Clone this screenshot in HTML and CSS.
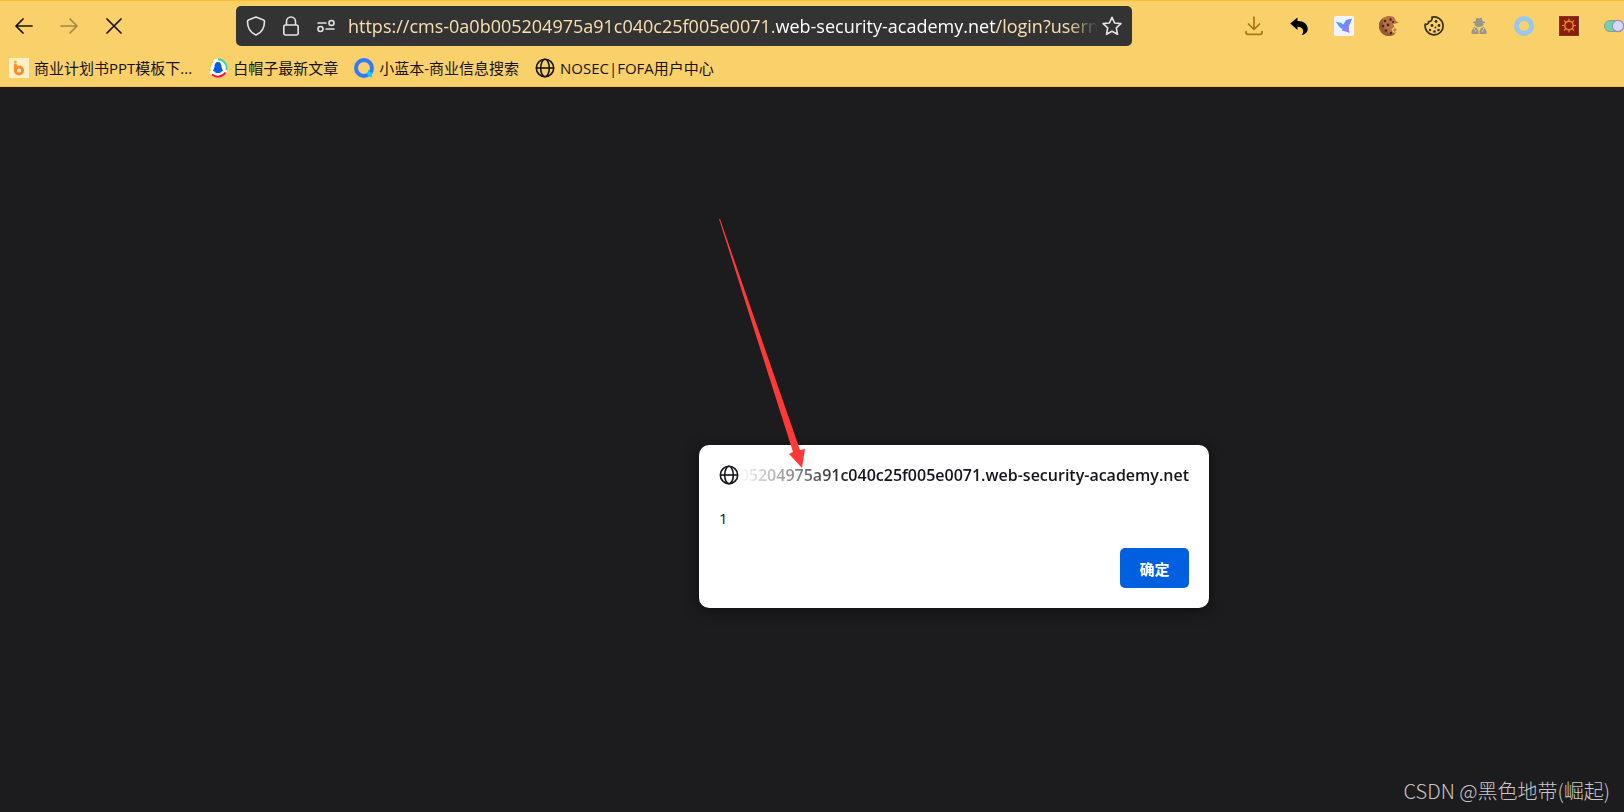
FILE: index.html
```html
<!DOCTYPE html>
<html lang="zh-CN">
<head>
    <meta charset="UTF-8">
    <meta name="viewport" content="width=device-width, initial-scale=1.0">
    <title>web-security-academy.net</title>
    <link rel="stylesheet" href="styles.css">
</head>
<body>
    <header class="browser">
        <div class="toolbar">
            <nav class="nav-buttons" aria-label="Navigation">
                <button class="icon-button" aria-label="Back">
                    <svg width="20" height="20" viewBox="0 0 20 20" fill="none" stroke="#15141a" stroke-width="1.7" stroke-linecap="round" stroke-linejoin="round"><path d="M18 10H2M9 3L2 10L9 17"/></svg>
                </button>
                <button class="icon-button" aria-label="Forward" disabled>
                    <svg width="20" height="20" viewBox="0 0 20 20" fill="none" stroke="#a3874a" stroke-width="1.7" stroke-linecap="round" stroke-linejoin="round"><path d="M2 10H18M11 3L18 10L11 17"/></svg>
                </button>
                <button class="icon-button" aria-label="Stop">
                    <svg width="20" height="20" viewBox="0 0 20 20" fill="none" stroke="#15141a" stroke-width="1.7" stroke-linecap="round"><path d="M3 3L17 17M17 3L3 17"/></svg>
                </button>
            </nav>

            <div class="urlbar">
                <button class="urlbar-button" aria-label="Tracking protection">
                    <svg width="20" height="20" viewBox="0 0 20 20" fill="none" stroke="#e4e4e4" stroke-width="1.6" stroke-linejoin="round"><path d="M10 1L17.5 3.9Q18.5 4.3 18.5 5.4C18.5 11.6 15.6 16.6 10 19C4.4 16.6 1.5 11.6 1.5 5.4Q1.5 4.3 2.5 3.9Z"/></svg>
                </button>
                <button class="urlbar-button" aria-label="Connection secure">
                    <svg width="20" height="20" viewBox="0 0 20 20" fill="none" stroke="#e4e4e4" stroke-width="1.6"><path d="M5.5 9V5.5a4.5 4.5 0 0 1 9 0V9"/><rect x="2.8" y="9" width="14.4" height="10" rx="2"/></svg>
                </button>
                <button class="urlbar-button" aria-label="Permissions">
                    <svg width="20" height="20" viewBox="0 0 20 20" fill="none" stroke="#e4e4e4" stroke-width="1.6" stroke-linecap="round"><circle cx="15.5" cy="7" r="2.5"/><circle cx="4.5" cy="13" r="2.5"/><path d="M2 7H10M10 13H18"/></svg>
                </button>
                <div class="url">https://cms-0a0b005204975a91c040c25f005e0071.<span class="url-host">web-security-academy.net</span>/login?userna</div>
                <button class="urlbar-button star" aria-label="Bookmark this page">
                    <svg width="20" height="20" viewBox="0 0 20 20" fill="none" stroke="#e4e4e4" stroke-width="1.6" stroke-linejoin="round"><path d="M10 1.3L12.6 7L18.9 7.6L14.3 11.9L15.5 18.3L10 15.3L4.5 18.3L5.7 11.9L1.1 7.6L7.4 7Z"/></svg>
                </button>
            </div>

            <div class="extensions">
                <button class="icon-button" aria-label="Downloads">
                    <svg width="20" height="20" viewBox="0 0 20 20" fill="none" stroke="#a8770e" stroke-width="1.7" stroke-linecap="round" stroke-linejoin="round"><path d="M10 1V13M4.5 8L10 13.5L15.5 8M2 15.5V16.5Q2 18.3 4 18.3H16Q18 18.3 18 16.5V15.5"/></svg>
                </button>
                <button class="icon-button" aria-label="Undo">
                    <svg width="20" height="20" viewBox="0 0 20 20"><path fill="#000" d="M1.2 7.5L8.5 1.5V5C15 5 18.7 8.5 18.7 13C18.7 16 17 18.3 12.5 19C15.5 16.5 15 10.8 8.5 10.8V14Z"/></svg>
                </button>
                <button class="icon-button" aria-label="Bird">
                    <svg width="20" height="20" viewBox="0 0 20 20">
                        <defs><linearGradient id="bird" x1="0" y1="0" x2="1" y2="1"><stop offset="0" stop-color="#3fb2ff"/><stop offset=".5" stop-color="#6b8cf8"/><stop offset="1" stop-color="#b86ff0"/></linearGradient></defs>
                        <rect width="20" height="20" rx="2" fill="#f0f4ff"/>
                        <path fill="url(#bird)" d="M1.8 5.5C4.5 7 6.5 5.5 9 8.5C11 7.5 10.5 4 14 3.5L18.3 2.5C17 4 17.3 6 15.5 8.5C14.3 11 15 14 15.5 17.5C12.5 14.5 10.5 16 7.5 14.2L9 12.8C6.5 12.5 6 11 4.5 10C5 9 2.5 8 1.8 5.5Z"/>
                    </svg>
                </button>
                <button class="icon-button" aria-label="Cookie editor">
                    <svg width="20" height="20" viewBox="0 0 20 20">
                        <path fill="#b8713f" d="M15 1.2A10 10 0 1 0 17.5 16.6L14 16.5L12.5 13L15.5 11L14 8L17 7.5L20 6.5L17 5Z"/>
                        <path fill="#9a5933" d="M4 2A10 10 0 0 0 10 20A10 10 0 0 0 16 18C9 18.5 3 14 4 2Z"/>
                        <g fill="#47291f"><circle cx="6" cy="5" r="1.3"/><circle cx="11.5" cy="3.5" r="1.2"/><circle cx="4" cy="10" r="1.3"/><circle cx="9" cy="9" r="1.4"/><circle cx="7" cy="14.5" r="1.3"/><circle cx="12" cy="17" r="1.2"/><circle cx="14" cy="6" r="1.1"/></g>
                        <path fill="#c4814b" d="M13.5 14L16 12L18 14L15.5 16Z"/>
                    </svg>
                </button>
                <button class="icon-button" aria-label="Cookies">
                    <svg width="20" height="20" viewBox="0 0 20 20"><path fill="none" stroke="#35301f" stroke-width="1.7" stroke-linejoin="round" d="M8 1.2A9 9 0 1 1 1.3 8C3 9 5 7.5 4.5 5.5C7 6 8.5 4 8 1.2Z"/><g fill="#35301f"><circle cx="12" cy="5.5" r="1.4"/><circle cx="8" cy="9.5" r="1.4"/><circle cx="15" cy="9.5" r="1.4"/><circle cx="6" cy="14" r="1.2"/><circle cx="11.5" cy="11.5" r="1"/><circle cx="10.5" cy="15.5" r="1.3"/><circle cx="14.5" cy="14" r="1.3"/></g></svg>
                </button>
                <button class="icon-button" aria-label="Agent">
                    <svg width="20" height="20" viewBox="0 0 20 20" fill="#989789"><path d="M6.5 5L7.5 1.5L10 2.5L12.5 1.5L13.5 5L16 6V7H14.5V9L12 11H8L5.5 9V7H4V6Z"/><path d="M5 11L8 12L9.5 15V18H2.5V15ZM15 11L12 12L10.5 15V18H17.5V15Z"/><path stroke="#f9ce6a" stroke-width=".8" d="M5 12L7 16M15 12L13 16"/></svg>
                </button>
                <button class="icon-button" aria-label="Ring">
                    <svg width="20" height="20" viewBox="0 0 20 20"><circle cx="10" cy="10" r="7.5" fill="none" stroke="#98c8ec" stroke-width="5"/></svg>
                </button>
                <button class="icon-button" aria-label="Sun">
                    <svg width="20" height="20" viewBox="0 0 20 20"><rect x=".5" y=".5" width="19" height="19" fill="#8f1d05" stroke="#713c31"/><g fill="none" stroke="#dc8d27"><circle cx="10" cy="9.5" r="4.2" stroke-width="1.5"/><path stroke-width="1.2" d="M10 2.5V5M10 14V16.5M3 9.5H5.5M14.5 9.5H17M5 4.5L7 6.5M13 12.5L15 14.5M5 14.5L7 12.5M13 6.5L15 4.5"/></g></svg>
                </button>
                <button class="icon-button" aria-label="Proxy switch">
                    <svg width="20" height="20" viewBox="0 0 20 20"><rect x=".5" y="4.5" width="19" height="11" rx="5.5" fill="#71d2b2" stroke="#9a9590"/><circle cx="14" cy="10" r="5.7" fill="#d4daf6" stroke="#9691b5" stroke-width="1.2"/></svg>
                </button>
            </div>
        </div>

        <nav class="bookmarks" aria-label="Bookmarks">
            <a class="bookmark" href="#">
                <svg width="20" height="20" viewBox="0 0 20 20"><rect width="20" height="20" fill="#fff0c8"/><path fill="none" stroke="#fb9427" stroke-width="3" stroke-linecap="round" d="M6.5 7V12.5"/><circle cx="6.3" cy="4" r="1.5" fill="#f6b51f"/><circle cx="10" cy="12.5" r="3.6" fill="none" stroke="#fb8c2c" stroke-width="3"/></svg>
                <span>商业计划书PPT模板下...</span>
            </a>
            <a class="bookmark" href="#">
                <svg width="20" height="20" viewBox="0 0 20 20"><circle cx="10" cy="10" r="9.5" fill="#fff"/><g fill="none" stroke-width="2"><path stroke="#35d6b0" d="M10 1.2A9 9 0 0 1 18.5 12"/><path stroke="#f5124e" d="M17.5 14.5A9 9 0 0 1 4 16.5"/><path stroke="#ffc62a" d="M2 13A9 9 0 0 1 5 3"/></g><path fill="#075ce5" d="M10 4C12.5 4 13.5 6 13.5 9L15 13L13.5 13.5L12 15H8L6.5 13.5L5 13L6.5 9C6.5 6 7.5 4 10 4Z"/></svg>
                <span>白帽子最新文章</span>
            </a>
            <a class="bookmark" href="#">
                <svg width="20" height="20" viewBox="0 0 20 20"><circle cx="10" cy="10" r="8" fill="none" stroke="#2f7bfa" stroke-width="4"/><path fill="#12c8fc" d="M14 11.5L16 14L19.5 15L17.5 16.5L18.5 19.5L15.5 18.5L13.5 19.5L14 17L11.5 15L14 14.5Z"/></svg>
                <span>小蓝本-商业信息搜索</span>
            </a>
            <a class="bookmark" href="#">
                <svg width="20" height="20" viewBox="0 0 20 20" fill="none" stroke="#15141a" stroke-width="1.6"><circle cx="10" cy="10" r="8.7"/><ellipse cx="10" cy="10" rx="4.3" ry="8.7"/><path d="M1.3 10H18.7"/></svg>
                <span>NOSEC|FOFA用户中心</span>
            </a>
        </nav>
    </header>

    <main class="page">
        <section class="dialog" role="alertdialog" aria-labelledby="dialog-title" aria-describedby="dialog-text">
            <div class="dialog-header">
                <svg width="20" height="20" viewBox="0 0 20 20" fill="none" stroke="#15141a" stroke-width="1.6"><circle cx="10" cy="10" r="8.7"/><ellipse cx="10" cy="10" rx="4.3" ry="8.7"/><path d="M1.3 10H18.7"/></svg>
                <h1 class="dialog-title" id="dialog-title"><span>05204975a91c040c25f005e0071.web-security-academy.net</span></h1>
            </div>
            <p class="dialog-text" id="dialog-text">1</p>
            <button class="dialog-ok">确定</button>
        </section>

        <!-- Arrow pointing at the dialog origin -->
        <svg class="arrow" width="90" height="252" viewBox="0 0 90 252" aria-hidden="true"><path fill="#ff3838" d="M0 0H1L81 231L86 230L83 249L70 235L74 233Z"/></svg>

        <p class="watermark">CSDN @黑色地带(崛起)</p>
    </main>
</body>
</html>
```
FILE: styles.css
```css
* {
    box-sizing: border-box;
}

body {
    display: flex;
    flex-direction: column;
    min-height: 100vh;
    margin: 0;
    overflow: hidden;
    background-color: #1c1b1d;
    font-family: "Open Sans", "Noto Sans CJK SC", sans-serif;
    font-size: 15px;
    color: #15141a;
}

svg {
    display: block;
    flex-shrink: 0;
}

button {
    padding: 0;
    border: none;
    background: none;
    font-family: inherit;
    cursor: pointer;
}

/* Browser chrome */
.browser {
    background-color: #fad06a;
    border-top: 1px solid #fcbf32;
    border-bottom: 1px solid #fcbf32;
}

.toolbar {
    display: flex;
    align-items: center;
    height: 50px;
    padding-left: 1px;
}

.nav-buttons,
.extensions {
    display: flex;
}

.icon-button {
    display: flex;
    align-items: center;
    justify-content: center;
    flex-shrink: 0;
    width: 45px;
    height: 40px;
}

.urlbar {
    display: flex;
    align-items: center;
    flex: 1;
    min-width: 0;
    height: 40px;
    margin: 0 99px 0 100px;
    padding: 0 10px;
    border-radius: 5px;
    background-color: #333;
}

.urlbar-button {
    flex-shrink: 0;
    margin-right: 15px;
}

.urlbar-button.star {
    margin: 0 0 0 4px;
}

.url {
    flex: 1;
    min-width: 0;
    margin-left: -3px;
    overflow: hidden;
    white-space: nowrap;
    font-size: 18px;
    color: #f8e0ae;
    -webkit-mask-image: linear-gradient(to left, transparent, #000 30px);
    mask-image: linear-gradient(to left, transparent, #000 30px);
}

.url-host {
    color: #fff;
}

.extensions {
    margin-right: -12px;
}

.bookmarks {
    display: flex;
    gap: 16px;
    height: 35px;
    padding: 7px 9px;
}

.bookmark {
    display: flex;
    align-items: center;
    gap: 5px;
    height: 20px;
    line-height: 20px;
    white-space: nowrap;
    color: #15141a;
    text-decoration: none;
}

/* Page and alert */
.page {
    position: relative;
    flex: 1;
}

.dialog {
    position: absolute;
    top: 358px;
    left: 699px;
    display: flex;
    flex-direction: column;
    width: 510px;
    padding: 20px;
    border-radius: 10px;
    background-color: #fff;
    box-shadow: 0 2px 14px rgba(0, 0, 0, 0.5);
}

.dialog-header {
    display: flex;
    align-items: center;
}

.dialog-title {
    display: flex;
    justify-content: flex-end;
    flex: 1;
    min-width: 0;
    margin: 0;
    overflow: hidden;
    white-space: nowrap;
    font-size: 16px;
    font-weight: 600;
    line-height: 20px;
    -webkit-mask-image: linear-gradient(to right, transparent, #000 110px);
    mask-image: linear-gradient(to right, transparent, #000 110px);
}

.dialog-text {
    margin: 22px 0 19px;
    line-height: 22px;
}

.dialog-ok {
    align-self: flex-end;
    width: 69px;
    height: 40px;
    border-radius: 5px;
    background-color: #0060df;
    color: #fff;
    font-size: 15px;
    font-weight: 700;
}

.arrow {
    position: absolute;
    top: 132px;
    left: 719px;
}

.watermark {
    position: absolute;
    right: 14px;
    bottom: 6px;
    margin: 0;
    font-family: "Noto Sans CJK SC", sans-serif;
    font-size: 20px;
    font-weight: 300;
    line-height: 30px;
    color: #c8c8c9;
}
```
